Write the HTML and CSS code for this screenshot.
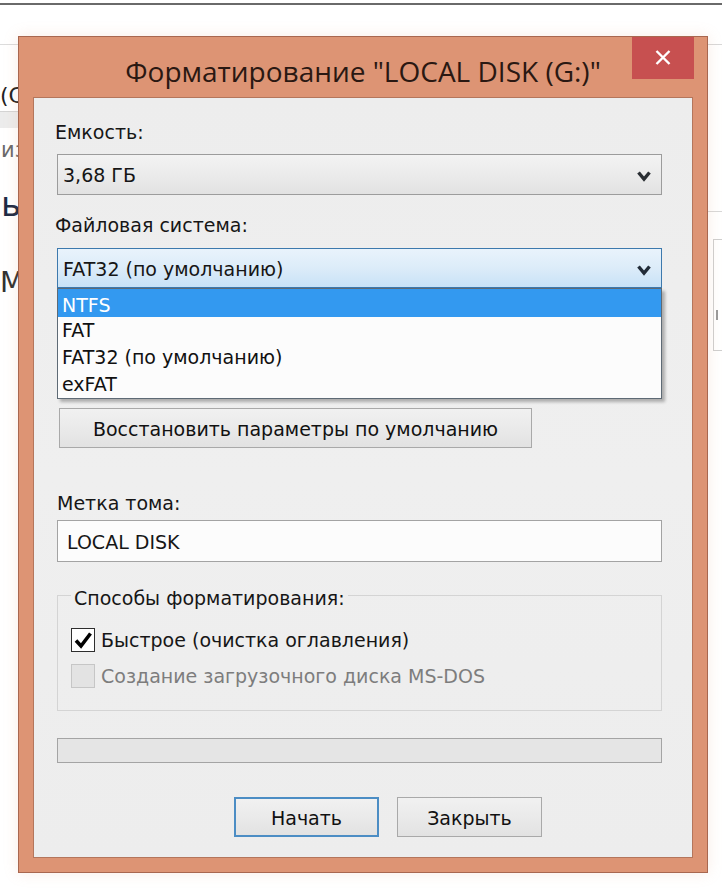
FILE: index.html
```html
<!DOCTYPE html>
<html lang="ru">
<head>
<meta charset="utf-8">
<title>Форматирование</title>
<link rel="stylesheet" href="styles.css">
</head>
<body>
<div class="desk">
  <div class="topline"></div>
  <div class="bgrow">
    <div class="bg-left">
      <div class="bg-line"></div>
      <div class="bg-c">(С</div>
      <div class="bg-band"></div>
      <div class="bg-i">из</div>
      <div class="bg-soft">ь</div>
      <div class="bg-m">М</div>
    </div>
    <div class="bg-right">
      <div class="bg-line r1"></div>
      <div class="bg-line r2"></div>
      <div class="bg-box"><span class="bg-tick"></span></div>
    </div>
  </div>

  <div class="dialog">
    <div class="titlebar">Форматирование "LOCAL DISK (G:)"</div>
    <div class="close">
      <svg width="16" height="15" viewBox="0 0 16 15"><path d="M1.5 1 L14.5 14 M14.5 1 L1.5 14" stroke="#fff" stroke-width="2.4" fill="none"/></svg>
    </div>
    <div class="panel">
      <div class="lbl l1">Емкость:</div>
      <div class="combo c1">
        <span>3,68 ГБ</span>
        <svg class="chev" width="14" height="12" viewBox="0 0 14 12"><path d="M1.5 2.5 L7 9 L12.5 2.5" stroke="#2a2e33" stroke-width="3.4" fill="none"/></svg>
      </div>
      <div class="lbl l2">Файловая система:</div>
      <div class="combo c2 active">
        <span>FAT32 (по умолчанию)</span>
        <svg class="chev" width="14" height="12" viewBox="0 0 14 12"><path d="M1.5 2.5 L7 9 L12.5 2.5" stroke="#222c38" stroke-width="3.4" fill="none"/></svg>
      </div>
      <div class="btn restore">Восстановить параметры по умолчанию</div>
      <div class="lbl l3">Метка тома:</div>
      <div class="input">LOCAL DISK</div>
      <fieldset class="group">
        <legend>Способы форматирования:</legend>
        <div class="chk r1">
          <span class="box">
            <svg width="20" height="20" viewBox="0 0 20 20"><path d="M3 10.5 L8 16 L17.5 3.5" stroke="#000" stroke-width="3.6" fill="none"/></svg>
          </span>
          <span>Быстрое (очистка оглавления)</span>
        </div>
        <div class="chk r2 disabled">
          <span class="box"></span>
          <span>Создание загрузочного диска MS-DOS</span>
        </div>
      </fieldset>
      <div class="progress"></div>
      <div class="buttons">
        <div class="btn act default">Начать</div>
        <div class="btn act">Закрыть</div>
      </div>

      <div class="droplist">
        <div class="item sel">NTFS</div>
        <div class="item">FAT</div>
        <div class="item">FAT32 (по умолчанию)</div>
        <div class="item">exFAT</div>
      </div>
    </div>
  </div>
</div>
</body>
</html>
```
FILE: styles.css
```css
html, body {
  margin: 0;
  padding: 0;
  background: #ffffff;
}
.desk {
  position: relative;
  width: 722px;
  height: 888px;
  overflow: hidden;
  background: #ffffff;
  font-family: "DejaVu Sans", sans-serif;
}
.topline {
  height: 2px;
  margin-top: 3px;
  background: #6a6a6a;
}
.bgrow {
  display: flex;
  justify-content: space-between;
}
.bg-left {
  width: 40px;
  display: flex;
  flex-direction: column;
}
.bg-line {
  margin-top: 39px;
  border-top: 1px solid #dcdcdc;
}
.bg-c {
  margin-top: 38px;
  font: 22px/26px "DejaVu Sans", sans-serif;
  color: #222;
}
.bg-band {
  margin-top: 2px;
  height: 16px;
  background: #ececec;
  border-top: 1px solid #d4d4d4;
}
.bg-i {
  margin-top: 10px;
  font: 21px/24px "DejaVu Sans", sans-serif;
  color: #6a6a6a;
  margin-left: 1px;
}
.bg-soft {
  margin-top: 24px;
  font: 34px/36px "DejaVu Sans", sans-serif;
  color: #1d2a45;
  margin-left: 1px;
}
.bg-m {
  margin-top: 46px;
  font: 28px/30px "DejaVu Sans", sans-serif;
  color: #333;
}
.bg-right {
  width: 14px;
  display: flex;
  flex-direction: column;
}
.bg-line.r1 {
  margin-top: 39px;
  border-top: 1px solid #d8d8d8;
}
.bg-line.r2 {
  margin-top: 166px;
  border-top: 1px solid #d8d8d8;
}
.bg-box {
  margin-top: 27px;
  margin-left: 5px;
  height: 110px;
  border: 1px solid #cfcfcf;
  border-right: none;
  position: relative;
}
.bg-tick {
  display: block;
  margin: 70px 0 0 2px;
  width: 2px;
  height: 10px;
  background: #9a9a9a;
}

/* dialog window */
.dialog {
  position: absolute;
  left: 18px;
  top: 36px;
  width: 690px;
  height: 837px;
  box-sizing: border-box;
  border: 1px solid #a8674f;
  background: #dd9474;
  padding: 0 14px 14px 14px;
  display: flex;
  flex-direction: column;
  box-shadow: 0 0 14px rgba(220, 150, 110, 0.18);
}
.titlebar {
  height: 60px;
  box-sizing: border-box;
  padding-top: 8px;
  display: flex;
  align-items: center;
  justify-content: center;
  font-family: "Open Sans", "Noto Sans", sans-serif;
  font-size: 28px;
  color: #2a1812;
  white-space: nowrap;
}
.close {
  position: absolute;
  top: 0;
  right: 13px;
  width: 62px;
  height: 42px;
  background: #c75050;
  display: flex;
  align-items: center;
  justify-content: center;
  padding-bottom: 2px;
  box-sizing: border-box;
}
.panel {
  position: relative;
  flex: 1;
  border: 1px solid #b4765c;
  background: linear-gradient(180deg, #ededed, #efefef 50%, #ededed);
  padding: 0 30px 0 23px;
  display: flex;
  flex-direction: column;
  align-items: stretch;
  font-size: 19px;
  line-height: 22px;
  color: #161616;
}
.lbl {
  height: 22px;
  margin-left: -2px;
  white-space: nowrap;
}
.l1 { margin-top: 23px; }
.l2 { margin-top: 19px; }
.l3 { margin-top: 44px; margin-left: 0; }

.combo {
  display: flex;
  align-items: center;
  justify-content: space-between;
  box-sizing: border-box;
  border: 1px solid #9c9c9c;
  background: linear-gradient(180deg, #f3f3f3 0%, #ebebeb 50%, #e2e2e2 100%);
  padding: 1px 10px 0 5px;
}
.c1 { height: 41px; margin-top: 11px; }
.c2 {
  height: 40px;
  margin-top: 12px;
  border-color: #3d79ad;
  background: linear-gradient(180deg, #e9f3fc 0%, #dcecf9 50%, #c8e2f7 100%);
}
.chev { display: block; margin-top: 2px; }

.btn {
  display: flex;
  align-items: center;
  justify-content: center;
  box-sizing: border-box;
  border: 1px solid #a9a9a9;
  background: linear-gradient(180deg, #f1f1f1 0%, #eaeaea 50%, #e2e2e2 100%);
  color: #111;
  white-space: nowrap;
}
.restore {
  margin-top: 120px;
  margin-left: 2px;
  width: 473px;
  height: 40px;
  padding-top: 1px;
}
.input {
  margin-top: 6px;
  height: 42px;
  box-sizing: border-box;
  border: 1px solid #a3a3a3;
  background: #fcfcfc;
  display: flex;
  align-items: center;
  padding: 1px 0 0 9px;
}
.group {
  margin: 19px 0 0 0;
  padding: 0 13px 22px 13px;
  border: 1px solid #d4d4d4;
  min-width: 0;
}
.group legend {
  padding: 6px 3px 0 3px;
  margin: 0;
  line-height: 22px;
  white-space: nowrap;
}
.chk {
  display: flex;
  align-items: center;
  gap: 6px;
  height: 25px;
  white-space: nowrap;
}
.chk.r1 { margin-top: 18px; }
.chk.r2 { margin-top: 11px; }
.box {
  width: 24px;
  height: 24px;
  box-sizing: border-box;
  border: 1px solid #2e2e2e;
  background: #ffffff;
  display: flex;
  align-items: center;
  justify-content: center;
  flex: none;
}
.chk.disabled { color: #7d7d7d; }
.chk.disabled .box {
  border-color: #c6c6c6;
  background: #e3e3e3;
}
.progress {
  margin-top: 27px;
  height: 25px;
  box-sizing: border-box;
  border: 1px solid #a4a4a4;
  background: #e5e5e5;
}
.buttons {
  margin-top: 34px;
  display: flex;
  gap: 18px;
  padding-left: 177px;
}
.act {
  width: 145px;
  height: 40px;
  padding-top: 1px;
}
.act.default {
  border: 2px solid #4c8dc4;
}

/* dropdown list overlay */
.droplist {
  position: absolute;
  left: 23px;
  top: 190px;
  width: 605px;
  box-sizing: border-box;
  border: 1px solid #5e6a75;
  background: #fcfcfc;
  box-shadow: 3px 3px 3px rgba(0, 0, 0, 0.28);
}
.item {
  height: 27px;
  line-height: 27px;
  padding-left: 4px;
  color: #111;
}
.item.sel {
  height: 28px;
  box-sizing: border-box;
  padding-top: 4px;
  line-height: 24px;
  background: #3399f0;
  color: #ffffff;
}
```
